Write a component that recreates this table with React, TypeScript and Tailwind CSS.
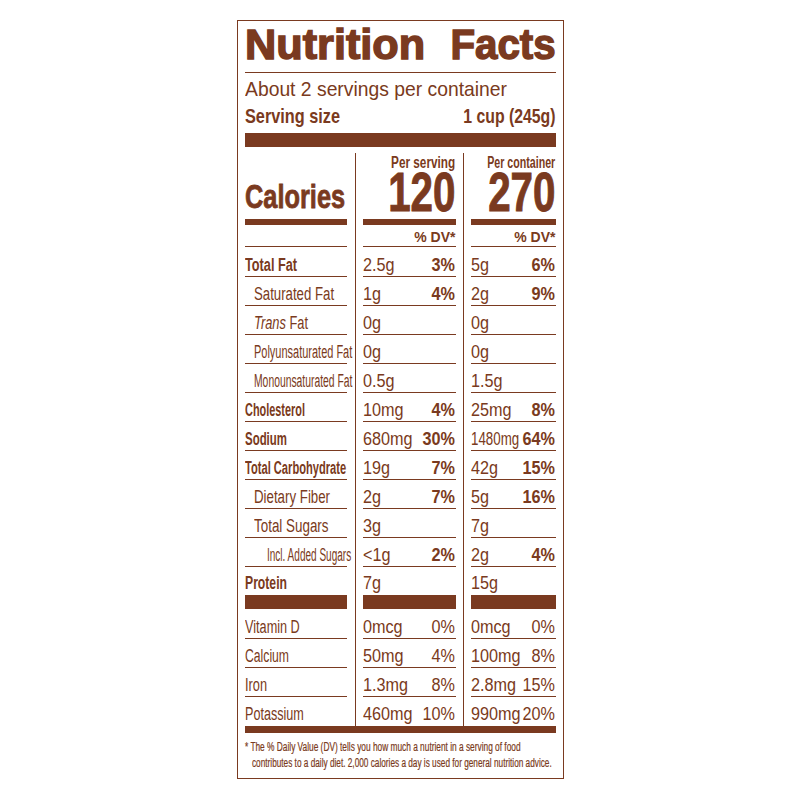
import React from "react";

type RowProps = {
  label: React.ReactNode;
  lc: string;
  ind?: string;
  a: string;
  ap?: string;
  b: string;
  bp?: string;
  bs?: string;
  h: string;
  line?: boolean;
  bold?: boolean;
};

function Row({ label, lc, ind = "", a, ap, b, bp, bs = "scale-x-[0.9]", h, line = true, bold = true }: RowProps) {
  const cell = line
    ? "flex items-end justify-between pb-[2px] border-b border-[#7a3a20]"
    : "flex items-end justify-between pb-[3px]";
  const pc = bold
    ? "inline-block shrink-0 whitespace-nowrap leading-none text-[18px] font-bold origin-right scale-x-[0.9]"
    : "inline-block shrink-0 whitespace-nowrap leading-none text-[18px] origin-right scale-x-[0.9]";
  return (
    <div className={`flex ${h}`}>
      <div className={`w-[102px] shrink-0 ${cell} ${ind}`}>
        <span className={`inline-block whitespace-nowrap leading-none text-[18px] origin-left ${lc}`}>{label}</span>
      </div>
      <div className="w-[8px] shrink-0" />
      <div className="w-px shrink-0 bg-[#7a3a20]" />
      <div className="w-[7px] shrink-0" />
      <div className={`w-[93px] shrink-0 ${cell}`}>
        <span className="inline-block min-w-0 whitespace-nowrap leading-none text-[18px] origin-left scale-x-[0.9]">{a}</span>
        {ap ? <span className={pc}>{ap}</span> : null}
      </div>
      <div className="w-[7px] shrink-0" />
      <div className="w-px shrink-0 bg-[#7a3a20]" />
      <div className="w-[7px] shrink-0" />
      <div className={`w-[85px] shrink-0 ${cell}`}>
        <span className={`inline-block min-w-0 whitespace-nowrap leading-none text-[18px] origin-left ${bs}`}>{b}</span>
        {bp ? <span className={pc}>{bp}</span> : null}
      </div>
    </div>
  );
}

function BarRow() {
  return (
    <div className="flex h-[14px]">
      <div className="w-[102px] shrink-0 bg-[#7a3a20]" />
      <div className="w-[8px] shrink-0" />
      <div className="w-px shrink-0 bg-[#7a3a20]" />
      <div className="w-[7px] shrink-0" />
      <div className="w-[93px] shrink-0 bg-[#7a3a20]" />
      <div className="w-[7px] shrink-0" />
      <div className="w-px shrink-0 bg-[#7a3a20]" />
      <div className="w-[7px] shrink-0" />
      <div className="w-[85px] shrink-0 bg-[#7a3a20]" />
    </div>
  );
}

export default function App() {
  return (
    <div className="min-h-[800px] bg-white flex justify-center pt-[20px]">
      <div className="w-[327px] h-fit border border-[#7a3a20] px-[7px] text-[#7a3a20] font-[family-name:'Liberation_Sans',Arial,sans-serif]">
        {/* Title */}
        <div className="h-[52px] border-b border-[#7a3a20] pt-[3px] flex justify-between">
          <span className="inline-block whitespace-nowrap text-[42px] leading-[42px] font-bold origin-left scale-x-[1.03] [-webkit-text-stroke:1.4px_#7a3a20]">
            Nutrition
          </span>
          <span className="inline-block whitespace-nowrap text-[42px] leading-[42px] font-bold origin-right scale-x-[0.96] [-webkit-text-stroke:1.4px_#7a3a20]">
            Facts
          </span>
        </div>
        <div className="h-[29px] flex items-end pb-[3px]">
          <span className="inline-block whitespace-nowrap text-[21px] leading-none origin-left scale-x-[0.92]">
            About 2 servings per container
          </span>
        </div>
        <div className="h-[28px] flex items-end justify-between pb-[4px]">
          <span className="inline-block whitespace-nowrap text-[21px] leading-none font-bold origin-left scale-x-[0.775]">
            Serving size
          </span>
          <span className="inline-block whitespace-nowrap text-[21px] leading-none font-bold origin-right scale-x-[0.753]">
            1 cup (245g)
          </span>
        </div>
        <div className="mt-[3px] h-[14px] bg-[#7a3a20]" />

        {/* Calories */}
        <div className="flex h-[100px]">
          <div className="w-[102px] shrink-0 flex flex-col">
            <div className="h-[72px] flex items-end pb-[6px]">
              <span className="inline-block whitespace-nowrap text-[34px] leading-none font-bold origin-left scale-x-[0.746] [-webkit-text-stroke:0.8px_#7a3a20]">
                Calories
              </span>
            </div>
            <div className="h-[6px] bg-[#7a3a20]" />
            <div className="h-[22px] border-b border-[#7a3a20]" />
          </div>
          <div className="w-[8px] shrink-0" />
          <div className="w-px shrink-0 bg-[#7a3a20] mt-[6px]" />
          <div className="w-[7px] shrink-0" />
          <div className="w-[93px] shrink-0 flex flex-col">
            <div className="h-[72px] flex flex-col items-end justify-end pb-[6px]">
              <span className="inline-block whitespace-nowrap text-[16px] leading-none font-bold origin-right scale-x-[0.735]">
                Per serving
              </span>
              <span className="inline-block whitespace-nowrap text-[56px] leading-[42px] font-bold origin-right scale-x-[0.72] [-webkit-text-stroke:1px_#7a3a20]">
                120
              </span>
            </div>
            <div className="h-[6px] bg-[#7a3a20]" />
            <div className="h-[22px] flex items-end justify-end pb-[2px] border-b border-[#7a3a20]">
              <span className="inline-block whitespace-nowrap text-[14px] leading-none font-bold">% DV*</span>
            </div>
          </div>
          <div className="w-[7px] shrink-0" />
          <div className="w-px shrink-0 bg-[#7a3a20] mt-[6px]" />
          <div className="w-[7px] shrink-0" />
          <div className="w-[85px] shrink-0 flex flex-col">
            <div className="h-[72px] flex flex-col items-end justify-end pb-[6px]">
              <span className="inline-block whitespace-nowrap text-[16px] leading-none font-bold origin-right scale-x-[0.665]">
                Per container
              </span>
              <span className="inline-block whitespace-nowrap text-[56px] leading-[42px] font-bold origin-right scale-x-[0.72] [-webkit-text-stroke:1px_#7a3a20]">
                270
              </span>
            </div>
            <div className="h-[6px] bg-[#7a3a20]" />
            <div className="h-[22px] flex items-end justify-end pb-[2px] border-b border-[#7a3a20]">
              <span className="inline-block whitespace-nowrap text-[14px] leading-none font-bold">% DV*</span>
            </div>
          </div>
        </div>

        {/* Nutrients */}
        <Row h="h-[30px]" label="Total Fat" lc="font-bold scale-x-[0.707]" a="2.5g" ap="3%" b="5g" bp="6%" />
        <Row h="h-[29px]" label="Saturated Fat" lc="scale-x-[0.734]" ind="pl-[9px]" a="1g" ap="4%" b="2g" bp="9%" />
        <Row
          h="h-[29px]"
          label={
            <>
              <i>Trans</i> Fat
            </>
          }
          lc="scale-x-[0.714]"
          ind="pl-[9px]"
          a="0g"
          b="0g"
        />
        <Row h="h-[29px]" label="Polyunsaturated Fat" lc="text-[17px] scale-x-[0.61]" ind="pl-[9px]" a="0g" b="0g" />
        <Row h="h-[29px]" label="Monounsaturated Fat" lc="text-[17px] scale-x-[0.575]" ind="pl-[9px]" a="0.5g" b="1.5g" />
        <Row h="h-[29px]" label="Cholesterol" lc="font-bold scale-x-[0.606]" a="10mg" ap="4%" b="25mg" bp="8%" />
        <Row h="h-[29px]" label="Sodium" lc="font-bold scale-x-[0.636]" a="680mg" ap="30%" b="1480mg" bp="64%" bs="scale-x-[0.74]" />
        <Row h="h-[29px]" label="Total Carbohydrate" lc="font-bold scale-x-[0.618]" a="19g" ap="7%" b="42g" bp="15%" />
        <Row h="h-[29px]" label="Dietary Fiber" lc="scale-x-[0.738]" ind="pl-[9px]" a="2g" ap="7%" b="5g" bp="16%" />
        <Row h="h-[29px]" label="Total Sugars" lc="scale-x-[0.745]" ind="pl-[9px]" a="3g" b="7g" />
        <Row h="h-[29px]" label="Incl. Added Sugars" lc="text-[17px] scale-x-[0.557]" ind="pl-[22px]" a="<1g" ap="2%" b="2g" bp="4%" />
        <Row h="h-[28px]" label="Protein" lc="font-bold scale-x-[0.677]" a="7g" b="15g" line={false} />
        <BarRow />
        <Row h="h-[30px]" label="Vitamin D" lc="scale-x-[0.705]" a="0mcg" ap="0%" b="0mcg" bp="0%" bold={false} />
        <Row h="h-[29px]" label="Calcium" lc="scale-x-[0.677]" a="50mg" ap="4%" b="100mg" bp="8%" bold={false} />
        <Row h="h-[29px]" label="Iron" lc="scale-x-[0.71]" a="1.3mg" ap="8%" b="2.8mg" bp="15%" bold={false} />
        <Row h="h-[29px]" label="Potassium" lc="scale-x-[0.70]" a="460mg" ap="10%" b="990mg" bp="20%" bold={false} line={false} />
        <div className="h-[7px] bg-[#7a3a20]" />

        {/* Footnote */}
        <div className="h-[45px] pt-[6px] text-[12px] leading-[16px]">
          <div>
            <span className="inline-block whitespace-nowrap origin-left scale-x-[0.694] [-webkit-text-stroke:0.2px_#7a3a20]">
              * The % Daily Value (DV) tells you how much a nutrient in a serving of food
            </span>
          </div>
          <div className="pl-[7px]">
            <span className="inline-block whitespace-nowrap origin-left scale-x-[0.687] [-webkit-text-stroke:0.2px_#7a3a20]">
              contributes to a daily diet. 2,000 calories a day is used for general nutrition advice.
            </span>
          </div>
        </div>
      </div>
    </div>
  );
}
